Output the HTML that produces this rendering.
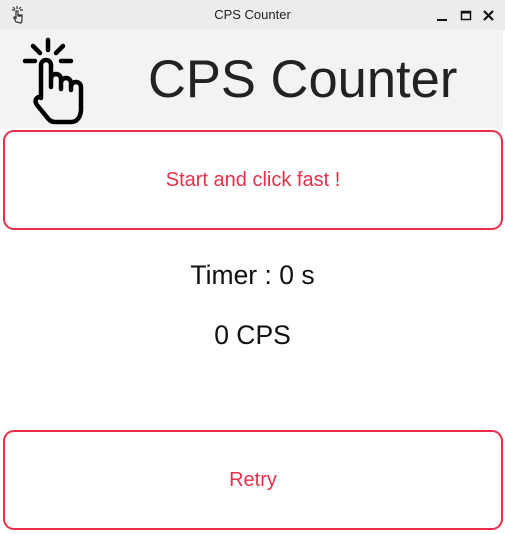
<!DOCTYPE html>
<html><head><meta charset="utf-8"><style>
html,body{margin:0;padding:0;width:505px;height:534px;overflow:hidden;background:#fff;font-family:"Liberation Sans",sans-serif}
.tb{position:absolute;left:0;top:0;width:505px;height:30px;background:#ececec;}
.tb .t{position:absolute;left:0;width:505px;top:7px;text-align:center;font-size:13px;color:#222}
.hdr{position:absolute;left:0;top:30px;width:503px;height:98px;background:#f3f3f3}
.h1{position:absolute;left:148px;top:47px;font-size:52.5px;color:#222;line-height:66px}
.btn{position:absolute;left:3px;width:496px;height:96px;border:2px solid #e8304a;border-radius:11px;box-sizing:content-box;color:#e8304a;font-size:20px;text-align:center;line-height:96px}
.lbl{position:absolute;left:0;width:505px;text-align:center;font-size:26.5px;color:#111}
</style></head><body>
<div class="tb"><div class="t">CPS Counter</div>
<svg style="position:absolute;left:10px;top:5px" width="18" height="20" viewBox="0 0 18 20" fill="none" stroke="#333" stroke-width="1.2"><path d="M7 1v3M2 5h3M10 5h3M3 2l2 2M11 2l-2 2"/><path d="M6 17l-2-4v-1h1l1 2V6h2v5h1v-1h1v1h1v-1h1v5l-1 3z"/></svg>
<svg style="position:absolute;left:430px;top:9px" width="65" height="14" viewBox="0 0 65 14"><rect x="7" y="10" width="10" height="2" fill="#111"/><rect x="31.5" y="2.5" width="9" height="8" fill="none" stroke="#111" stroke-width="1.5"/><rect x="31" y="2" width="10" height="2.5" fill="#111"/><path d="M54 2l9 9M63 2l-9 9" stroke="#111" stroke-width="2.2"/></svg>
</div>
<div class="hdr"></div>
<svg style="position:absolute;left:20px;top:36px" width="70" height="92" viewBox="0 0 70 92" fill="none" stroke="#000" stroke-width="4.5" stroke-linecap="round" stroke-linejoin="round">
<path d="M28 4v10M5 25h10M41 25h10M13 10l7 7M43 10l-7 7"/>
<path d="M21 62V29a5 5 0 0 1 10 0v22M31 43a5 5 0 0 1 10 0v10M41 47a5 5 0 0 1 10 0v7M51 51a5 5 0 0 1 10 0v22c0 8-4 13-10 13H35c-4 0-6-2-9-6L17 69c-2-3-2-5 0-7 2-2 3-1 4 0"/>
</svg>
<div class="h1">CPS Counter</div>
<div class="btn" style="top:130px">Start and click fast !</div>
<div class="lbl" style="top:260px">Timer : 0 s</div>
<div class="lbl" style="top:320px">0 CPS</div>
<div class="btn" style="top:430px">Retry</div>
</body></html>
